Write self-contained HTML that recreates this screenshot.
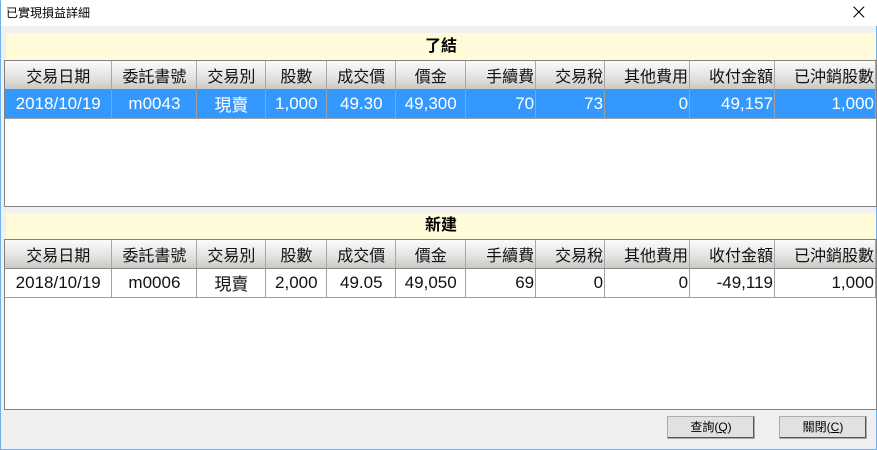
<!DOCTYPE html>
<html><head><meta charset="utf-8"><style>
*{margin:0;padding:0;box-sizing:border-box}
body{width:877px;height:450px;background:#f0f0f0;font-family:"Liberation Sans","Noto Sans CJK TC",sans-serif;position:relative;overflow:hidden;border-left:1px solid #6fb1ef;border-right:1px solid #6fb1ef;border-bottom:1px solid #6fb1ef}
.title{position:absolute;left:0;top:0;width:876px;height:26px;background:#fff;font-size:12px;line-height:26px;padding-left:5px;color:#000}
.close{position:absolute;right:9px;top:0px;font-size:22px;font-weight:300;font-family:"DejaVu Sans",sans-serif;color:#000;line-height:26px}
.panel{position:absolute;left:3px;width:873px;background:#fff;border:1px solid #828282}
.yel{position:absolute;left:5px;width:870px;background:#fffbd8;font-weight:bold;font-size:16px;text-align:center;color:#000}
table{border-collapse:collapse;position:absolute;left:0;top:0;table-layout:fixed}
td{font-size:17px;height:29px;border-right:1px solid #a0a0a0;border-bottom:1px solid #a0a0a0;white-space:nowrap;overflow:hidden;padding:0 1px;color:#111}
tr.h td{font-size:16px;height:28px;background:linear-gradient(#fbfbfb,#e2e2e0 60%,#c8c8c4);border-right:1px solid #a8a8a8;border-bottom:1px solid #8a8a8a}
.c{text-align:center}.r{text-align:right}
tr.sel td{background:#3399ff;color:#fff}
.btn{position:absolute;top:416px;width:88px;height:23px;background:#e1e1e1;border:1px solid #adadad;box-shadow:inset -1px -1px 0 #555;font-size:12px;text-align:center;line-height:21px;color:#000}
</style></head><body>
<div class="title">已實現損益詳細<span class="close">×</span></div>

<div class="yel" style="top:33px;height:27px;line-height:27px">了結</div>
<div class="panel" style="top:60px;height:147px">
<table>
<colgroup><col style="width:107px"><col style="width:85px"><col style="width:69px"><col style="width:61px"><col style="width:69px"><col style="width:70px"><col style="width:70px"><col style="width:69px"><col style="width:85px"><col style="width:85px"><col style="width:101px"></colgroup>
<tr class="h"><td class="c">交易日期</td><td class="c">委託書號</td><td class="c">交易別</td><td class="c">股數</td><td class="c">成交價</td><td class="c">價金</td><td class="r">手續費</td><td class="r">交易稅</td><td class="r">其他費用</td><td class="r">收付金額</td><td class="r">已沖銷股數</td></tr>
<tr class="sel"><td class="c">2018/10/19</td><td class="c">m0043</td><td class="c">現賣</td><td class="c">1,000</td><td class="c">49.30</td><td class="c">49,300</td><td class="r">70</td><td class="r">73</td><td class="r">0</td><td class="r">49,157</td><td class="r">1,000</td></tr>
</table></div>

<div class="yel" style="top:213px;height:26px;line-height:26px">新建</div>
<div class="panel" style="top:239px;height:171px">
<table>
<colgroup><col style="width:107px"><col style="width:85px"><col style="width:69px"><col style="width:61px"><col style="width:69px"><col style="width:70px"><col style="width:70px"><col style="width:69px"><col style="width:85px"><col style="width:85px"><col style="width:101px"></colgroup>
<tr class="h"><td class="c">交易日期</td><td class="c">委託書號</td><td class="c">交易別</td><td class="c">股數</td><td class="c">成交價</td><td class="c">價金</td><td class="r">手續費</td><td class="r">交易稅</td><td class="r">其他費用</td><td class="r">收付金額</td><td class="r">已沖銷股數</td></tr>
<tr><td class="c">2018/10/19</td><td class="c">m0006</td><td class="c">現賣</td><td class="c">2,000</td><td class="c">49.05</td><td class="c">49,050</td><td class="r">69</td><td class="r">0</td><td class="r">0</td><td class="r">-49,119</td><td class="r">1,000</td></tr>
</table></div>

<div class="btn" style="left:666px">查詢(<u>Q</u>)</div>
<div class="btn" style="left:778px">關閉(<u>C</u>)</div>
</body></html>
